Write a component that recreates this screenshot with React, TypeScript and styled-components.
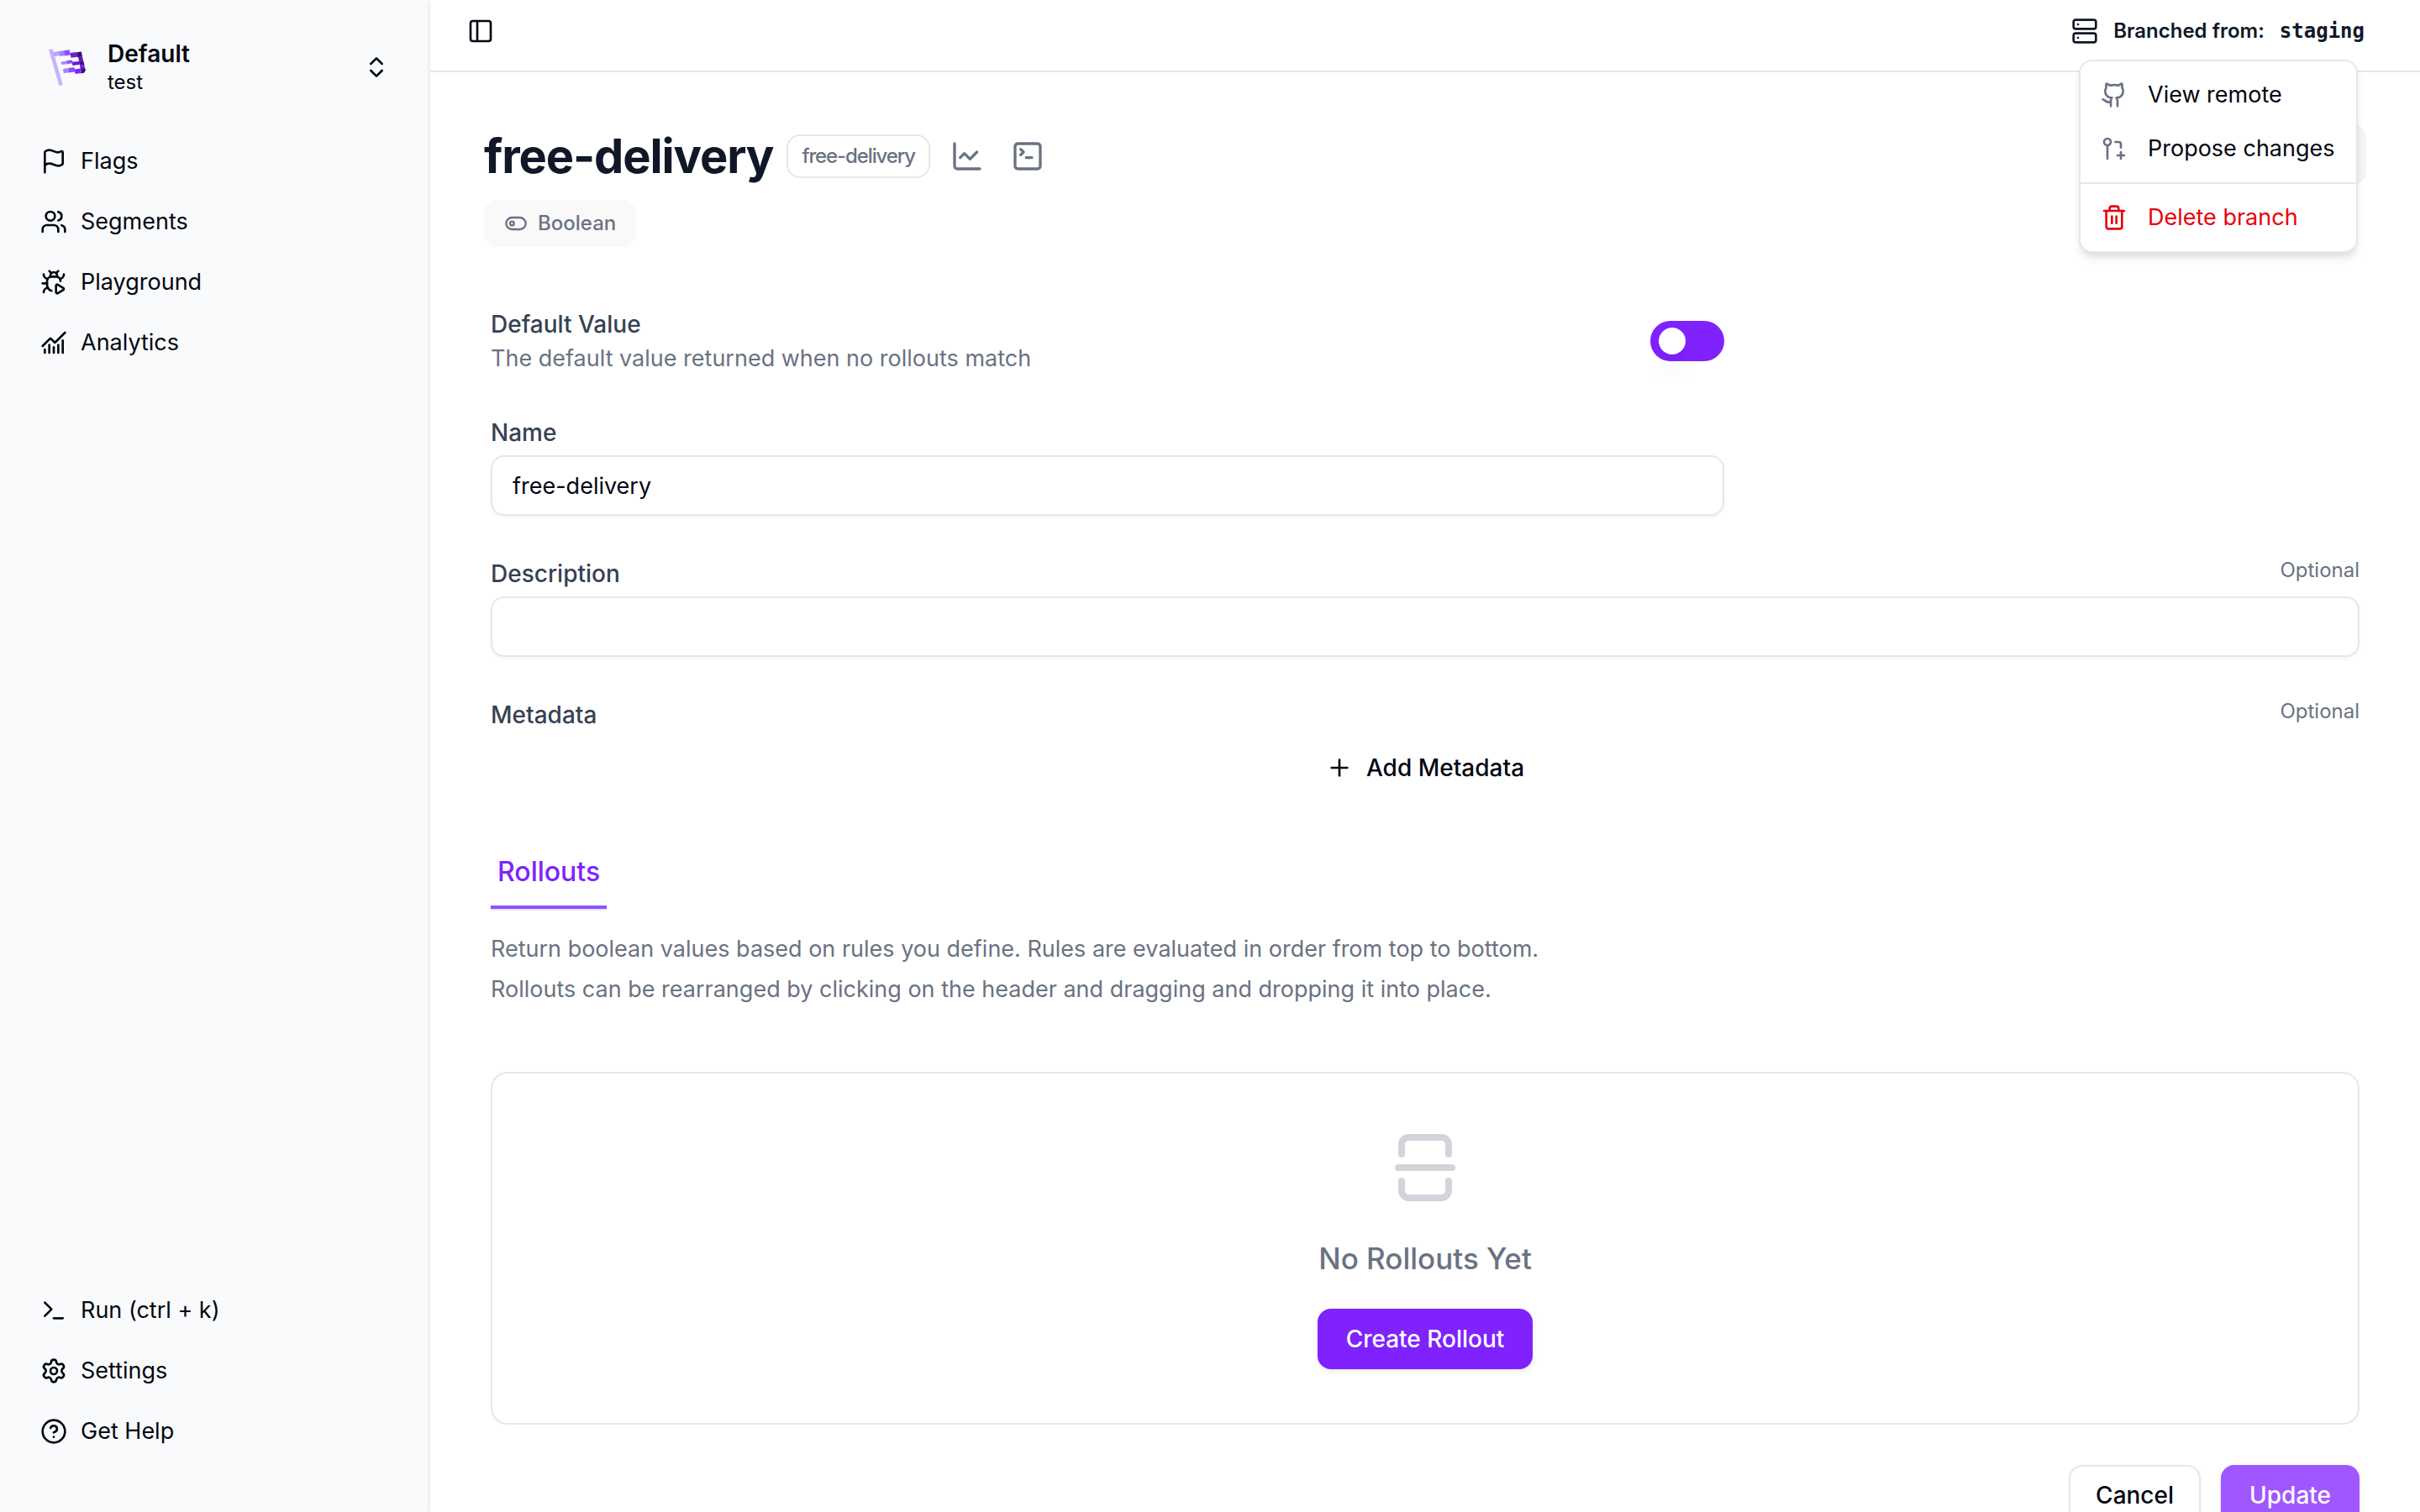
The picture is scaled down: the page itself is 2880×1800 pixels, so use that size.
import React from 'react';
import styled, { createGlobalStyle, css } from 'styled-components';
import {
  BugPlay, ChartNoAxesCombined, ChartLine, ChevronsUpDown, CircleHelp, Flag, GitPullRequestCreate,
  Github, PanelLeft, Plus, Server, Settings, SquareTerminal, Terminal, Trash2, Users, SquareSplitVertical,
} from 'lucide-react';

const Global = createGlobalStyle`
  *, *::before, *::after { box-sizing: border-box; }
  body { margin: 0; background: #fff; color: #030712; font-family: Inter, "Liberation Sans", sans-serif; font-size: 27px; line-height: 40px; }
  h1, h2, p, ul { margin: 0; padding: 0; }
  button, input { font: inherit; color: inherit; margin: 0; }
  a { color: inherit; text-decoration: none; }
  svg { flex: none; display: block; }
`;

const Shell = styled.div`
  display: grid;
  grid-template-columns: 512px minmax(0, 1fr);
  grid-template-rows: minmax(0, 1fr);
  height: 100vh;
`;

const Sidebar = styled.aside`
  display: flex;
  flex-direction: column;
  background: #f9fafb;
`;

const Switcher = styled.button`
  display: flex;
  align-items: center;
  gap: 16px;
  margin: 32px;
  padding: 16px;
  height: 96px;
  border: 0;
  background: none;
  text-align: left;
`;

const LogoBox = styled.span`
  display: grid;
  place-items: center;
  width: 64px;
  height: 64px;
`;

const SwitcherText = styled.span`
  display: grid;
  flex: 1;
  line-height: 36px;
`;

const Project = styled.strong`
  font-size: 28px;
  font-weight: 600;
`;

const Environment = styled.span`
  font-size: 24px;
  line-height: 32px;
`;

const NavList = styled.ul`
  display: grid;
  gap: 8px;
  list-style: none;
  padding: 0 32px;
`;

const BottomNav = styled(NavList)`
  margin-top: auto;
  padding-bottom: 64px;
`;

const NavLink = styled.a`
  display: flex;
  align-items: center;
  gap: 16px;
  height: 64px;
  padding: 0 16px;
`;

const Main = styled.main`
  position: relative;
  min-width: 0;
  overflow-y: auto;
  scrollbar-width: none;
  background: #fff;
  box-shadow: 0 2px 6px rgb(0 0 0 / 0.1), 0 2px 4px -2px rgb(0 0 0 / 0.1);
`;

const TopBar = styled.header`
  position: relative;
  display: flex;
  align-items: center;
  justify-content: space-between;
  height: 86px;
  padding: 0 66px 10px 44px;
  border-bottom: 2px solid #e5e7eb;
`;

const IconButton = styled.button`
  display: grid;
  place-items: center;
  padding: 0;
  border: 0;
  background: none;
  color: inherit;
`;

const BranchButton = styled.button`
  display: flex;
  align-items: center;
  gap: 18px;
  padding: 0;
  border: 0;
  background: none;
  color: #101828;
  font-size: 24px;
  line-height: 32px;
  font-weight: 600;
`;

const BranchName = styled.span`
  font-family: "DejaVu Sans Mono", monospace;
`;

const Menu = styled.div`
  position: absolute;
  z-index: 2;
  top: 71px;
  right: 74px;
  width: 332px;
  padding: 8px 0;
  border: 2px solid #e5e7eb;
  border-radius: 16px;
  background: #fff;
  box-shadow: 0 8px 12px -2px rgb(0 0 0 / 0.1), 0 4px 8px -4px rgb(0 0 0 / 0.1);
`;

const MenuItem = styled.button<{ $danger?: boolean }>`
  display: flex;
  align-items: center;
  gap: 24px;
  width: 100%;
  height: 64px;
  padding: 0 24px;
  border: 0;
  background: none;
  color: ${p => (p.$danger ? '#e7000b' : '#030712')};
  white-space: nowrap;

  svg { color: ${p => (p.$danger ? '#e7000b' : '#6a7282')}; }
`;

const MenuLine = styled.hr`
  height: 2px;
  margin: 8px 0;
  border: 0;
  background: #e5e7eb;
`;

const Page = styled.div`
  padding: 64px 64px 0;
`;

const Heading = styled.div`
  display: flex;
  align-items: center;
  gap: 24px;
  height: 72px;
`;

const Title = styled.h1`
  display: flex;
  align-items: center;
  gap: 16px;
  color: #101828;
  font-size: 56px;
  line-height: 72px;
  font-weight: 700;
  letter-spacing: -0.02em;
`;

const KeyBadge = styled.span`
  display: inline-flex;
  align-items: center;
  height: 52px;
  padding: 0 16px;
  border: 2px solid #e5e7eb;
  border-radius: 16px;
  color: #6a7282;
  font-size: 24px;
  font-weight: 500;
`;

const HeadingActions = styled.div`
  display: flex;
  gap: 32px;
  color: #6a7282;
`;

const TypeBadge = styled.div`
  display: flex;
  align-items: center;
  gap: 12px;
  width: fit-content;
  height: 56px;
  margin-top: 16px;
  padding: 0 24px;
  border-radius: 16px;
  background: #f9f9fa;
  color: #6a7282;
  font-size: 24px;
  font-weight: 500;
`;

const MoreButton = styled.button`
  position: absolute;
  z-index: 1;
  top: 148px;
  right: 64px;
  width: 160px;
  height: 72px;
  border: 0;
  border-radius: 16px;
  background: #f3f4f6;
`;

const Form = styled.form`
  display: grid;
  padding: 72px 8px 0;
`;

const Narrow = styled.div`
  display: grid;
  width: 66%;
`;

const SwitchRow = styled.div`
  display: flex;
  align-items: center;
  justify-content: space-between;
  height: 80px;
`;

const Label = styled.label`
  color: #364153;
  font-size: 28px;
  font-weight: 500;
`;

const Hint = styled.p`
  color: #6a7282;
`;

const Switch = styled.input`
  appearance: none;
  display: flex;
  align-items: center;
  width: 88px;
  height: 48px;
  padding: 0 10px;
  border-radius: 24px;
  background: #7f22fe;

  &::before {
    content: '';
    width: 32px;
    height: 32px;
    border-radius: 50%;
    background: #fff;
    box-shadow: 0 20px 30px -6px rgb(0 0 0 / 0.1), 0 8px 12px -8px rgb(0 0 0 / 0.1);
  }
`;

const Field = styled.div`
  display: grid;
  gap: 7px;
  margin-top: 49px;
`;

const LabelRow = styled.div`
  display: flex;
  justify-content: space-between;
`;

const Optional = styled.span`
  color: #6a7282;
  font-size: 24px;
  line-height: 32px;
`;

const TextInput = styled.input`
  width: 100%;
  height: 72px;
  padding: 0 24px;
  border: 2px solid #e5e7eb;
  border-radius: 16px;
  background: #fff;
  box-shadow: 0 2px 4px rgb(0 0 0 / 0.05);
`;

const button = css`
  display: inline-flex;
  align-items: center;
  justify-content: center;
  gap: 16px;
  height: 72px;
  padding: 0 32px;
  border: 2px solid transparent;
  border-radius: 16px;
  background: none;
  font-size: 28px;
  font-weight: 500;
`;

const GhostButton = styled.button`
  ${button}
  justify-self: center;
`;

const PrimaryButton = styled.button`
  ${button}
  border-color: #7f22fe;
  background: #7f22fe;
  color: #fff;
  box-shadow: 0 2px 6px rgb(0 0 0 / 0.1);
  &:disabled { border-color: #a057ff; background: #a057ff; }
`;

const OutlineButton = styled.button`
  ${button}
  padding: 0 30px;
  border-color: #e5e7eb;
  box-shadow: 0 2px 4px rgb(0 0 0 / 0.05);
`;

const Tabs = styled.div`
  display: flex;
  width: fit-content;
  margin-top: 60px;
  border-bottom: 2px solid #e5e7eb;
`;

const Tab = styled.a`
  padding: 8px 8px 20px;
  border-bottom: 4px solid #8e51ff;
  color: #7f22fe;
  font-size: 32px;
  line-height: 40px;
  font-weight: 500;
`;

const Intro = styled.p`
  margin-top: 22px;
  color: #6a7282;
  line-height: 48px;
`;

const Empty = styled.section`
  display: flex;
  flex-direction: column;
  align-items: center;
  margin-top: 74px;
  padding: 64px 0;
  border: 2px solid #e5e7eb;
  border-radius: 20px;
  color: #d3d4da;
`;

const EmptyTitle = styled.h2`
  margin: 32px 0;
  color: #6a7282;
  font-size: 35px;
  line-height: 56px;
  font-weight: 500;
`;

const Footer = styled.div`
  display: flex;
  justify-content: flex-end;
  gap: 24px;
  margin-top: 48px;
`;

const BooleanIcon = () => (
  <svg width="28" height="28" viewBox="0 0 24 24" fill="none" stroke="currentColor" strokeWidth="2" aria-hidden="true">
    <rect x="2" y="6" width="20" height="12" rx="6" />
    <circle cx="8" cy="12" r="2" />
  </svg>
);

/* A pennant made of stepped blocks, darkening away from the pole. */
const Logo = () => (
  <svg width="48" height="48" viewBox="0 0 48 48" aria-hidden="true">
    <path d="M2 3l4.6-.8L18.8 45l-4.4 1z" fill="#c4b4ff" />
    <path d="M7 6.2l7-1.2 1 5-6.8 1.3z" fill="#b9a2ff" />
    <path d="M14 5l7.5-1 1 6-7.5 1z" fill="#a684ff" />
    <path d="M20.5 4.2l6.2-1 1 6.3-6.2 1z" fill="#8e51ff" />
    <path d="M27.3 7l8-1 1.200 5.800-8 .9z" fill="#6a1fd6" />
    <path d="M35.3 6.200l5.500-.8 1.200 6-5.500.8z" fill="#35106b" />
    <path d="M37 11.900l5-.7 1.500 7-5 .8z" fill="#5d18c9" />
    <path d="M38 18.200l5.500-.6.900 3.400-5.400.8z" fill="#35106b" />
    <path d="M39 21.800l5.400-.8.600 6-5 .9z" fill="#6a1fd6" />
    <path d="M41 26l4.500-.7.300 2.700-1.800 2.800-3.500.6z" fill="#35106b" />
    <path d="M16.600 17.500l6.400-.8.500 3.500-6.200.9z" fill="#a684ff" />
    <path d="M23 16.300l6.800-.8.700 3.800-6.800.9z" fill="#8e51ff" />
    <path d="M29.600 17.800l8.400-.8.800 4-8.400 1z" fill="#6a1fd6" />
    <path d="M19 26l6.300-1 .9 5.300-6.400.9z" fill="#a684ff" />
    <path d="M25.200 25l7.300-1 .9 5.500-7.300 1z" fill="#8e51ff" />
    <path d="M32.600 26.500l7.400-1 1 5.500-7.400 1z" fill="#7f22fe" />
  </svg>
);

export default function App() {
  return (
    <Shell>
      <Global />
      <Sidebar>
        <Switcher type="button">
          <LogoBox><Logo /></LogoBox>
          <SwitcherText>
            <Project>Default</Project>
            <Environment>test</Environment>
          </SwitcherText>
          <ChevronsUpDown size={32} />
        </Switcher>
        <nav>
          <NavList>
            <li><NavLink href="#flags"><Flag size={32} />Flags</NavLink></li>
            <li><NavLink href="#segments"><Users size={32} />Segments</NavLink></li>
            <li><NavLink href="#playground"><BugPlay size={32} />Playground</NavLink></li>
            <li><NavLink href="#analytics"><ChartNoAxesCombined size={32} />Analytics</NavLink></li>
          </NavList>
        </nav>
        <BottomNav>
          <li><NavLink href="#run"><Terminal size={32} />Run (ctrl + k)</NavLink></li>
          <li><NavLink href="#settings"><Settings size={32} />Settings</NavLink></li>
          <li><NavLink href="#help"><CircleHelp size={32} />Get Help</NavLink></li>
        </BottomNav>
      </Sidebar>
      <Main>
        <TopBar>
          <IconButton type="button" aria-label="Toggle sidebar"><PanelLeft size={32} /></IconButton>
          <BranchButton type="button">
            <Server size={32} />
            Branched from: <BranchName>staging</BranchName>
          </BranchButton>
          <Menu>
            <MenuItem type="button"><Github size={32} />View remote</MenuItem>
            <MenuItem type="button"><GitPullRequestCreate size={32} />Propose changes</MenuItem>
            <MenuLine />
            <MenuItem type="button" $danger><Trash2 size={32} />Delete branch</MenuItem>
          </Menu>
          <MoreButton type="button" aria-label="Actions" />
        </TopBar>
        <Page>
          <Heading>
            <Title>free-delivery <KeyBadge>free-delivery</KeyBadge></Title>
            <HeadingActions>
              <IconButton type="button" aria-label="Analytics"><ChartLine size={40} /></IconButton>
              <IconButton type="button" aria-label="Playground"><SquareTerminal size={40} /></IconButton>
            </HeadingActions>
          </Heading>
          <TypeBadge><BooleanIcon />Boolean</TypeBadge>
          <Form>
            <Narrow>
              <SwitchRow>
                <div>
                  <Label htmlFor="enabled">Default Value</Label>
                  <Hint>The default value returned when no rollouts match</Hint>
                </div>
                <Switch id="enabled" type="checkbox" role="switch" />
              </SwitchRow>
              <Field>
                <Label htmlFor="name">Name</Label>
                <TextInput id="name" defaultValue="free-delivery" />
              </Field>
            </Narrow>
            <Field>
              <LabelRow><Label htmlFor="description">Description</Label><Optional>Optional</Optional></LabelRow>
              <TextInput id="description" />
            </Field>
            <Field>
              <LabelRow><Label as="span">Metadata</Label><Optional>Optional</Optional></LabelRow>
              <GhostButton type="button"><Plus size={32} />Add Metadata</GhostButton>
            </Field>
            <Tabs><Tab href="#rollouts">Rollouts</Tab></Tabs>
            <Intro>
              Return boolean values based on rules you define. Rules are evaluated in order from top to bottom.<br />
              Rollouts can be rearranged by clicking on the header and dragging and dropping it into place.
            </Intro>
            <Empty>
              <SquareSplitVertical size={96} />
              <EmptyTitle>No Rollouts Yet</EmptyTitle>
              <PrimaryButton type="button">Create Rollout</PrimaryButton>
            </Empty>
            <Footer>
              <OutlineButton type="button">Cancel</OutlineButton>
              <PrimaryButton type="submit" disabled>Update</PrimaryButton>
            </Footer>
          </Form>
        </Page>
      </Main>
    </Shell>
  );
}
